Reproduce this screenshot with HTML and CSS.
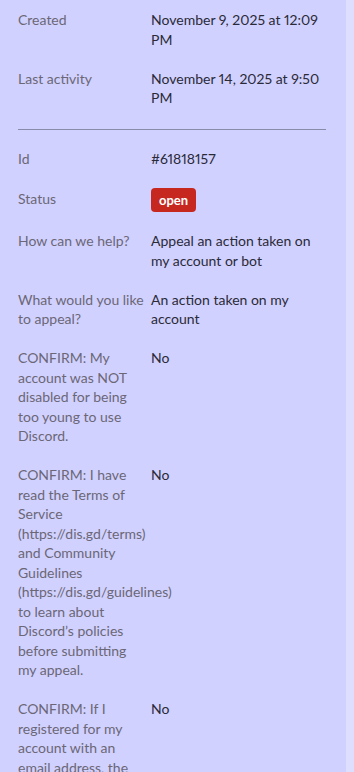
FILE: index.html
```html
<!DOCTYPE html>
<html lang="en">
<head>
    <meta charset="UTF-8">
    <meta name="viewport" content="width=device-width, initial-scale=1.0">
    <title>Ticket details</title>
    <link rel="stylesheet" href="styles.css">
</head>
<body>
    <div class="panel">
        <!-- Ticket timestamps -->
        <dl class="details">
            <dt>Created</dt>
            <dd>November 9, 2025 at 12:09 PM</dd>
            <dt>Last activity</dt>
            <dd>November 14, 2025 at 9:50 PM</dd>
        </dl>

        <hr class="divider">

        <!-- Ticket fields -->
        <dl class="details">
            <dt>Id</dt>
            <dd>#61818157</dd>
            <dt class="status-label">Status</dt>
            <dd><span class="badge">open</span></dd>
            <dt>How can we help?</dt>
            <dd>Appeal an action taken on my account or bot</dd>
            <dt>What would you like to appeal?</dt>
            <dd>An action taken on my account</dd>
            <dt>CONFIRM: My account was NOT disabled for being too young to use Discord.</dt>
            <dd>No</dd>
            <dt>CONFIRM: I have read the Terms of Service (https://dis.gd/terms) and Community Guidelines (https://dis.gd/guidelines) to learn about Discord’s policies before submitting my appeal.</dt>
            <dd>No</dd>
            <dt>CONFIRM: If I registered for my account with an email address, the email address I provided is correct.</dt>
            <dd>No</dd>
        </dl>
    </div>
</body>
</html>
```

FILE: styles.css
```css
* {
    box-sizing: border-box;
}

body {
    margin: 0;
    padding: 0;
    background-color: #dedeff;
    font-family: Lato, "Noto Sans", Arial, sans-serif;
    font-size: 14px;
    line-height: 19.5px;
    font-variant-numeric: proportional-nums;
}

.panel {
    width: 346px;
    min-height: 100vh;
    background-color: #d1d1ff;
    padding: 10px 20px 20px 18px;
}

.details {
    display: grid;
    grid-template-columns: 133px 1fr;
    row-gap: 19.5px;
    margin: 0;
}

.details dt {
    color: #6b6776;
    padding-right: 5px;
}

.details dd {
    margin: 0;
    color: #2a2a38;
}

.status-label {
    padding-top: 1px;
}

.badge {
    display: inline-block;
    background-color: #c6281f;
    color: #fff;
    font-weight: bold;
    font-size: 13px;
    line-height: 24px;
    padding: 0 8px;
    border-radius: 4px;
}

.divider {
    border: none;
    border-top: 1px solid #8a8aab;
    margin: 21px 0 19px;
}
```
